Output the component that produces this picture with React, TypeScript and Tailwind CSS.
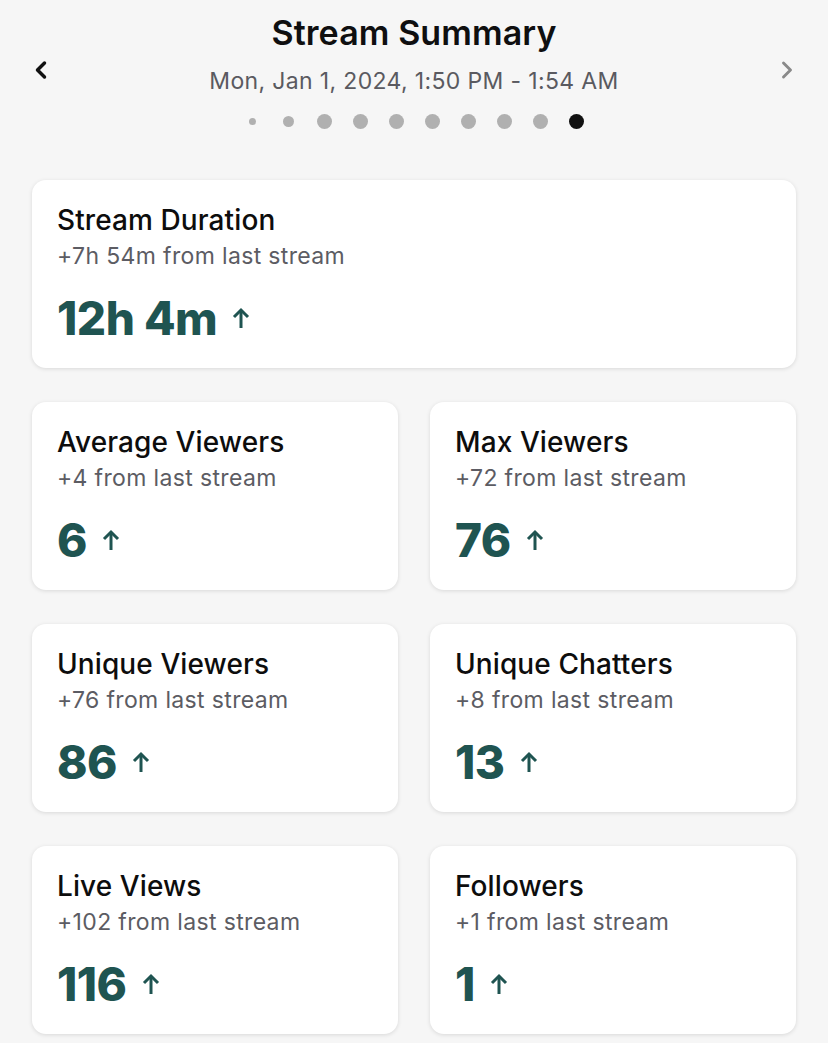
import { ChevronLeft, ChevronRight } from 'lucide-react';

type Stat = { title: string; delta: string; value: string };

const duration: Stat = { title: 'Stream Duration', delta: '+7h 54m from last stream', value: '12h 4m' };

const stats: Stat[] = [
  { title: 'Average Viewers', delta: '+4 from last stream', value: '6' },
  { title: 'Max Viewers', delta: '+72 from last stream', value: '76' },
  { title: 'Unique Viewers', delta: '+76 from last stream', value: '86' },
  { title: 'Unique Chatters', delta: '+8 from last stream', value: '13' },
  { title: 'Live Views', delta: '+102 from last stream', value: '116' },
  { title: 'Followers', delta: '+1 from last stream', value: '1' },
];

// pager dots, the first ones shrink toward the edge
const dots = [
  'w-[7px] h-[7px] bg-[#b0b0b0]',
  'w-[11px] h-[11px] bg-[#b0b0b0]',
  'w-[15px] h-[15px] bg-[#b0b0b0]',
  'w-[15px] h-[15px] bg-[#b0b0b0]',
  'w-[15px] h-[15px] bg-[#b0b0b0]',
  'w-[15px] h-[15px] bg-[#b0b0b0]',
  'w-[15px] h-[15px] bg-[#b0b0b0]',
  'w-[15px] h-[15px] bg-[#b0b0b0]',
  'w-[15px] h-[15px] bg-[#b0b0b0]',
  'w-[15px] h-[15px] bg-[#111111]',
];

const UpArrow = () => (
  <svg width="20" height="22" viewBox="0 0 20 22" fill="none" stroke="currentColor" strokeWidth="3" strokeLinecap="butt" strokeLinejoin="miter">
    <path d="M10 21V3" />
    <path d="M3 10l7-7 7 7" />
  </svg>
);

const StatCard = ({ s }: { s: Stat }) => (
  <div className="bg-white rounded-[14px] shadow-[0_1px_4px_rgba(0,0,0,0.12)] h-[188px] px-[25px] pt-[22px]">
    <h3 className="text-[28px] font-medium text-[#0d0d0d] leading-[36px] tracking-[0.1px]">{s.title}</h3>
    <p className="text-[23px] text-[#5c5c63] leading-[32px] mt-[2px] tracking-[0.35px]">{s.delta}</p>
    <div className="flex items-center gap-[14px] mt-[20px] text-[#1f5451]">
      <span className="text-[46px] font-extrabold leading-[52px] tracking-[-0.5px]">{s.value}</span>
      <UpArrow />
    </div>
  </div>
);

export default function App() {
  return (
    <div className="min-h-[1043px] bg-[#f6f6f6] font-['Inter',sans-serif]">
      <header className="relative pt-[11px]">
        <h1 className="text-center text-[34px] font-semibold text-[#0f0f10] leading-[44px] tracking-[0.1px]">Stream Summary</h1>
        <p className="text-center text-[23px] text-[#5a5a60] leading-[32px] mt-[10px] tracking-[0.35px]">Mon, Jan 1, 2024, 1:50 PM - 1:54 AM</p>
        <ChevronLeft className="absolute left-[27px] top-[56px] text-[#111]" size={28} strokeWidth={3} />
        <ChevronRight className="absolute right-[27px] top-[56px] text-[#8a8a8a]" size={28} strokeWidth={2.5} />
        <div className="flex justify-center items-center mt-[17px]">
          {dots.map((d, i) => (
            <span key={i} className="w-[36px] flex justify-center">
              <span className={`${d} rounded-full`} />
            </span>
          ))}
        </div>
      </header>

      <main className="px-[32px] pt-[51px] pb-[10px]">
        <StatCard s={duration} />
        <div className="grid grid-cols-2 gap-x-[32px] gap-y-[34px] mt-[34px]">
          {stats.map((s) => (
            <StatCard key={s.title} s={s} />
          ))}
        </div>
      </main>
    </div>
  );
}
